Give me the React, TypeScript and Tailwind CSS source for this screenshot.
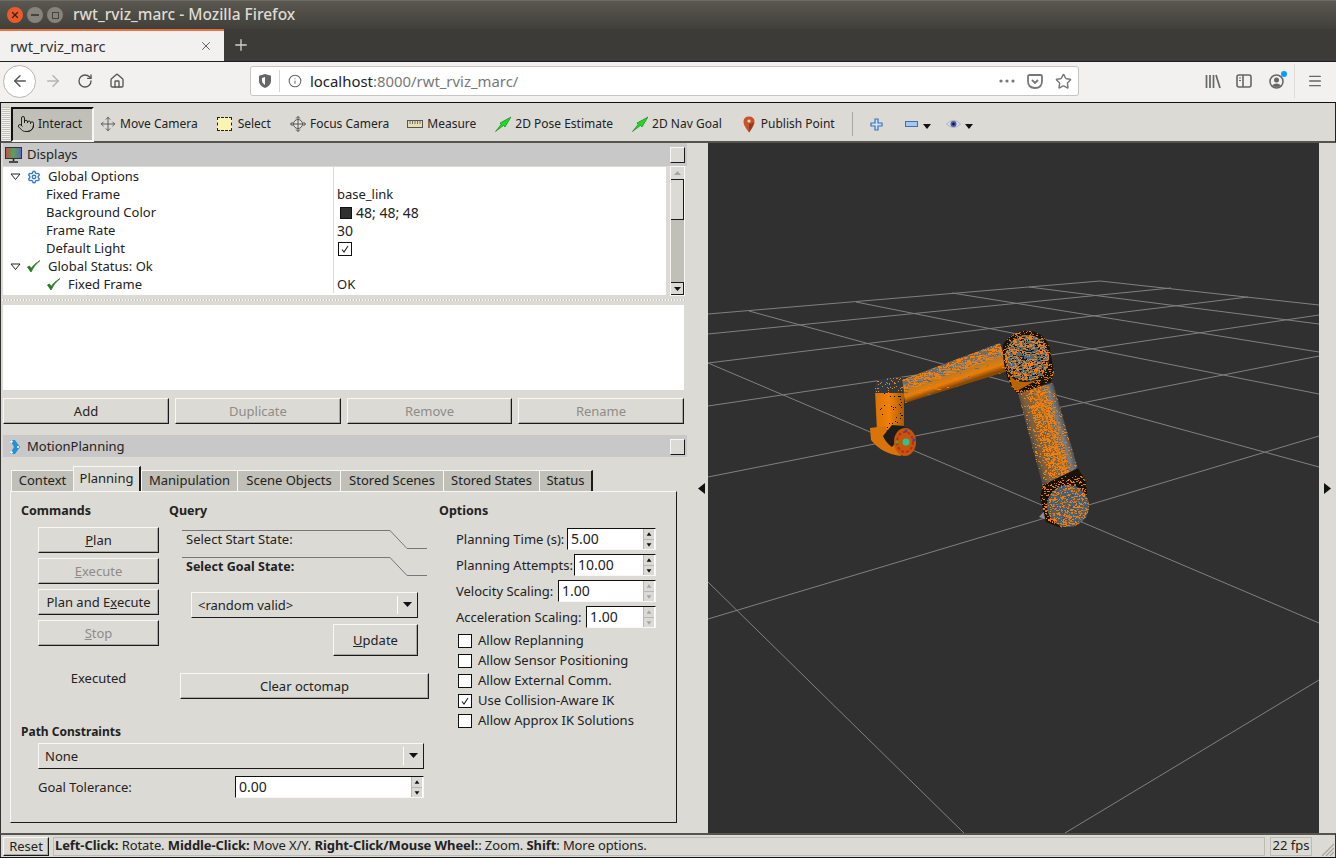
import { useMemo } from 'react';
import { ArrowLeft, ArrowRight, RotateCw, Home, Info, Star, Menu, Pointer, Move, Settings, X, Plus } from 'lucide-react';

const qtFont = "font-['Noto_Sans',sans-serif]";

// seeded speckle so the robot texture is stable between renders
function speckle(seed: number, x0: number, y0: number, x1: number, y1: number, density: number | ((x: number, y: number) => number), colors: string[], maxRun = 2) {
    let s = seed;
    const rnd = () => {
        s = (s * 1664525 + 1013904223) % 4294967296;
        return s / 4294967296;
    };
    const out: { x: number; y: number; w: number; c: string }[] = [];
    for (let y = y0; y < y1; y++) {
        for (let x = x0; x < x1; x++) {
            const d = typeof density === 'number' ? density : density(x, y);
            if (rnd() < d) {
                out.push({ x, y, w: 1 + Math.floor(rnd() * maxRun), c: colors[Math.floor(rnd() * colors.length)] });
            }
        }
    }
    return out;
}

function Speckles({ clip, data }: { clip: string; data: ReturnType<typeof speckle> }) {
    return (
        <g clipPath={`url(#${clip})`} shapeRendering="crispEdges">
            {data.map((d, i) => <rect key={i} x={d.x} y={d.y} width={d.w} height={1} fill={d.c} />)}
        </g>
    );
}

const gridLines = [
    [708, 314, 1100, 281], [1100, 281, 1319, 305],
    [708, 334, 1171, 288], [708, 363, 1248, 297], [708, 406, 1319, 315], [708, 477, 1319, 356],
    [708, 619, 1319, 436], [1065, 833, 1319, 680],
    [1029, 287, 1319, 324], [952, 293, 1319, 352], [856, 302, 1319, 394], [749, 311, 1319, 467],
    [708, 363, 1319, 623], [708, 582, 964, 833],
];

const orange = '#f07f09';

function Viewport() {
    // link1 noise sits in the middle band, link2 noise follows the long axis
    const link1 = useMemo(() => speckle(11, 900, 340, 1010, 405, (x, y) => {
        const d = (y - (381 - (x - 905) * 0.36)) / 9;
        return Math.abs(d) < 1 ? 0.36 : 0.02;
    }, [orange, orange, orange, '#6b6b6b'], 4), []);
    const link2 = useMemo(() => speckle(23, 1015, 380, 1085, 490, (x, y) => {
        const c = 1035 + (y - 388) * 0.27;
        const t = x - c;
        return t > -10 && t < 12 ? 0.5 : 0.12;
    }, [orange, orange, orange, '#5c6468'], 2), []);
    const wrist = useMemo(() => speckle(37, 874, 392, 905, 432, (x) => (x > 888 && x < 902 ? 0.05 : 0.012), ['#141008'], 1), []);
    const cap = useMemo(() => speckle(39, 874, 378, 905, 393, 0.1, [orange], 1), []);
    const top = useMemo(() => speckle(41, 1003, 332, 1052, 385, 0.5, [orange, orange, orange, '#4a6a82', '#1a1a1a'], 3), []);
    const rim = useMemo(() => speckle(43, 1000, 328, 1058, 396, 0.28, [orange, '#b8650a', '#0f0f0f'], 2), []);
    const base = useMemo(() => speckle(53, 1048, 485, 1090, 527, 0.34, [orange, orange, '#d96f06', '#3c5468'], 2), []);
    const baseRim = useMemo(() => speckle(57, 1038, 476, 1092, 530, 0.25, [orange, '#c9700c', '#0f0f0f'], 2), []);
    return (
        <svg className="block w-[611px] h-[690px] bg-[#303030]" viewBox="708 143 611 690">
            <defs>
                <linearGradient id="lnk1" gradientUnits="userSpaceOnUse" x1="946" y1="362" x2="954" y2="386">
                    <stop offset="0" stopColor="#666666" /><stop offset="0.35" stopColor="#7e7e7e" /><stop offset="0.5" stopColor="#b87a2a" /><stop offset="0.8" stopColor="#ea7d08" /><stop offset="1" stopColor="#8a4a04" />
                </linearGradient>
                <linearGradient id="lnk2" gradientUnits="userSpaceOnUse" x1="1028" y1="445" x2="1072" y2="432">
                    <stop offset="0" stopColor="#3a3a3a" /><stop offset="0.2" stopColor="#7a5f40" /><stop offset="0.55" stopColor="#a06c30" /><stop offset="0.78" stopColor="#7c7c7c" /><stop offset="1" stopColor="#2e2e2e" />
                </linearGradient>
                <linearGradient id="wrs" x1="0" y1="0" x2="1" y2="0">
                    <stop offset="0" stopColor="#d97308" /><stop offset="0.5" stopColor="#f08008" /><stop offset="1" stopColor="#a85a05" />
                </linearGradient>
                <clipPath id="c1"><polygon points="902,380 1000,343 1008,371 905,403" /></clipPath>
                <clipPath id="c2"><polygon points="1018,393 1053,383 1082,483 1043,487" /></clipPath>
                <clipPath id="c3"><polygon points="875,392 904,392 904,427 877,432" /></clipPath>
                <clipPath id="c4"><ellipse cx="1027" cy="358" rx="22" ry="23" /></clipPath>
                <clipPath id="c5"><circle cx="1068" cy="506" r="21" /></clipPath>
                <clipPath id="c6"><path d="M1003 345 Q1010 333 1023 331 Q1041 329 1049 345 L1054 372 L1051 382 L1018 394 L1011 386 Q1002 368 1003 345 Z" /></clipPath>
                <clipPath id="c7"><path d="M1043 485 L1040 497 L1046 522 L1062 528 L1088 505 L1086 482 L1078 468 Z" /></clipPath>
                <clipPath id="c8"><path d="M875 388 Q875 379 882 379 L902 377 L904 393 L875 393 Z" /></clipPath>
            </defs>

            {gridLines.map((l, i) => <line key={i} x1={l[0]} y1={l[1]} x2={l[2]} y2={l[3]} stroke="#808080" strokeWidth="1" />)}

            {/* base */}
            <polygon points="1039,517 1062,525 1046,509" fill="#8c8c8c" />

            {/* long link */}
            <polygon points="1018,393 1053,383 1082,483 1043,487" fill="url(#lnk2)" />
            <Speckles clip="c2" data={link2} />
            <path d="M1037 392 L1070 482" stroke={orange} strokeWidth="2" opacity="0.75" />
            <path d="M1043 485 L1040 497 L1046 522 L1062 528 L1088 505 L1086 482 L1078 468 Z" fill="#1a1208" />
            <Speckles clip="c7" data={baseRim} />

            {/* upper link */}
            <polygon points="902,380 1000,343 1008,371 905,403" fill="url(#lnk1)" />
            <Speckles clip="c1" data={link1} />

            {/* shoulder joint */}
            <path d="M1003 345 Q1010 333 1023 331 Q1041 329 1049 345 L1054 372 L1051 382 L1018 394 L1011 386 Q1002 368 1003 345 Z" fill="#1d1408" />
            <Speckles clip="c6" data={rim} />
            <path d="M1009 374 Q1016 386 1037 380 L1017 391 L1012 386 Z" fill="#b8650a" />
            <ellipse cx="1027" cy="358" rx="22" ry="23" fill="#4d6a80" />
            <Speckles clip="c4" data={top} />

            {/* wrist link */}
            <polygon points="875,390 904,390 904,427 877,432" fill="url(#wrs)" />
            <Speckles clip="c3" data={wrist} />
            <path d="M875 388 Q875 379 882 379 L902 377 L904 393 L875 393 Z" fill="#2f3a42" />
            <Speckles clip="c8" data={cap} />

            {/* last joint and flange */}
            <path d="M870 428 L886 426 L888 440 L897 441 L901 456 Q882 454 871 440 Z" fill="#d9740a" />
            <path d="M883 436 L892 425 L904 426 L907 430 L892 447 Q886 443 883 436 Z" fill="#1d1d1d" />
            <ellipse cx="905" cy="442" rx="11" ry="14" fill="#c2570e" />
            <ellipse cx="905" cy="442" rx="8" ry="10" fill="none" stroke="#c9261a" strokeWidth="2" strokeDasharray="3 2" />
            <circle cx="897" cy="442" r="1.5" fill="#3cb034" />
            <circle cx="914" cy="440" r="1.5" fill="#4a3f9a" />
            <circle cx="906" cy="431" r="1.5" fill="#4a3f9a" />
            <circle cx="906" cy="442" r="3.5" fill="#2fc48c" />

            {/* bottom disc */}
            <circle cx="1068" cy="506" r="21" fill="#46627a" />
            <Speckles clip="c5" data={base} />
        </svg>
    );
}

function QtButton({ children, disabled, className }: { children: React.ReactNode; disabled?: boolean; className: string }) {
    return (
        <div className={`flex items-center justify-center pt-px bg-[#dcdad5] border border-t-[#f8f7f6] border-l-[#f8f7f6] border-r-[#1a1a1a] border-b-[#1a1a1a] shadow-[inset_-1px_-1px_0_#a9a7a2] text-[13px] ${disabled ? 'text-[#8d8c88]' : 'text-[#222]'} ${className}`}>
            {children}
        </div>
    );
}

function Combo({ label, className }: { label: string; className: string }) {
    return (
        <div className={`flex items-center h-[26px] bg-[#dcdad5] border border-t-[#f8f7f6] border-l-[#f8f7f6] border-r-[#1a1a1a] border-b-[#1a1a1a] text-[13px] text-[#222] pl-[6px] ${className}`}>
            <span className="flex-1 pt-px">{label}</span>
            <span className="h-[18px] w-px bg-[#9a9893] border-r border-white" />
            <svg width="19" height="8" viewBox="0 0 19 8"><polygon points="5,1 14,1 9.5,6" fill="#111" /></svg>
        </div>
    );
}

function Spin({ value, width, dim }: { value: string; width: string; dim?: boolean }) {
    const fill = dim ? '#a5a4a0' : '#111';
    return (
        <div className={`flex h-[22px] bg-white border border-t-[#111] border-l-[#111] border-r-[#f8f7f6] border-b-[#f8f7f6] ${width}`}>
            <span className="flex-1 pl-[3px] leading-[20px] text-[14px] text-[#222]">{value}</span>
            <div className="flex flex-col w-[11px] mr-px bg-[#dcdad5] border-l border-[#b9b7b2]">
                <svg className="flex-1 border-b border-[#b9b7b2]" viewBox="0 0 10 10" width="10"><polygon points="2.5,7 7.5,7 5,3.5" fill={fill} /></svg>
                <svg className="flex-1" viewBox="0 0 10 10" width="10"><polygon points="2.5,3.5 7.5,3.5 5,7" fill={fill} /></svg>
            </div>
        </div>
    );
}

function Check({ checked, label }: { checked?: boolean; label?: string }) {
    return (
        <div className="flex items-center h-[20px] text-[13px] text-[#222]">
            <span className="flex w-[14px] h-[14px] items-center justify-center bg-white border border-[#111]">
                {checked && <svg width="10" height="10" viewBox="0 0 10 10"><path d="M2 5.5 L4 8 L8 2" fill="none" stroke="#222" strokeWidth="1.1" /></svg>}
            </span>
            {label && <span className="ml-[6px]">{label}</span>}
        </div>
    );
}

function Tri() {
    return <svg width="11" height="8" viewBox="0 0 11 8"><polygon points="1,1 10,1 5.5,6.5" fill="#fff" stroke="#222" strokeWidth="1" /></svg>;
}

function Tick({ size = 15 }: { size?: number }) {
    return <svg width={size} height={size} viewBox="0 0 15 15"><path d="M1.5 8 L5 13 Q8 6 14 1.5 Q8 5 5 9.5 L3.5 7 Z" fill="#1f7a1f" stroke="#1f7a1f" strokeWidth="0.8" /></svg>;
}

function TreeRow({ children, value }: { children: React.ReactNode; value?: React.ReactNode }) {
    return (
        <div className="flex h-[18px] items-center">
            <div className="flex w-[330px] pt-px items-center">{children}</div>
            <div className="flex flex-1 h-[18px] pt-px items-center pl-[3px] border-l border-[#dcdad5]">{value}</div>
        </div>
    );
}

function TitleBar({ icon, title, className }: { icon: React.ReactNode; title: string; className: string }) {
    return (
        <div className={`flex items-center w-[684px] ml-[2px] bg-[#c8c8c8] text-[13px] text-[#222] ${className}`}>
            {icon}
            <span className="flex-1">{title}</span>
            <div className="w-[15px] h-[16px] mr-[2px] bg-[#dcdad5] border border-t-[#f8f7f6] border-l-[#f8f7f6] border-r-[#1a1a1a] border-b-[#1a1a1a]" />
        </div>
    );
}

function Grip() {
    return <div className="h-[2px] bg-[repeating-linear-gradient(90deg,#f6f5f3_0_1px,#c8c6c1_1px_2px,#dcdad5_2px_3px)]" />;
}

function ToolItem({ icon, label, className }: { icon: React.ReactNode; label: string; className: string }) {
    return (
        <div className={`flex items-center ${className}`}>
            <span className="flex w-[16px] h-[16px] items-center justify-center">{icon}</span>
            <span>{label}</span>
        </div>
    );
}

function GreenArrow() {
    return (
        <svg width="16" height="16" viewBox="0 0 16 16">
            <path d="M0.5 15.5 L6 8.5 L5 7 L16 1 L10 11 L8.5 9.5 Z" fill="#17e01c" stroke="#0c5a10" strokeWidth="0.5" />
        </svg>
    );
}

function DownCaret() {
    return <svg width="8" height="5" viewBox="0 0 8 5"><polygon points="0,0 8,0 4,5" fill="#111" /></svg>;
}

function QueryTab({ label, bold }: { label: string; bold?: boolean }) {
    return (
        <div className={`relative w-[260px] h-[27px] pl-[17px] leading-[18px] text-[#222] ${bold ? 'pt-[4px] font-bold text-[12.5px]' : 'pt-[3px] text-[13px]'}`}>
            <svg className="absolute left-0 top-0" width="260" height="27" viewBox="0 0 260 27">
                <path d="M13 3.5 H221 L238 21.5 H258" fill="none" stroke="#777" strokeWidth="1" />
            </svg>
            <span className="relative">{label}</span>
        </div>
    );
}

const tabs = [
    { name: 'Context', w: 'w-[62px]' },
    { name: 'Planning', w: 'w-[68px]', active: true },
    { name: 'Manipulation', w: 'w-[96px]' },
    { name: 'Scene Objects', w: 'w-[103px]' },
    { name: 'Stored Scenes', w: 'w-[103px]' },
    { name: 'Stored States', w: 'w-[96px]' },
    { name: 'Status', w: 'w-[54px]' },
];

export default function App() {
    return (
        <div className={`flex flex-col w-[1336px] h-[858px] overflow-hidden bg-[#3c3b37] ${qtFont}`}>
            {/* window title */}
            <div className="flex items-center h-[29px] bg-gradient-to-b from-[#5a5850] to-[#403f3a] border-t border-[#6d6b63]">
                <div className="flex items-center gap-[4px] pl-[7px]">
                    <span className="flex w-[16px] h-[16px] items-center justify-center rounded-full bg-[#e95b2b] text-[#3c2015]"><X size={10} strokeWidth={3} /></span>
                    <span className="flex w-[16px] h-[16px] items-center justify-center rounded-full bg-[#85837c]"><span className="w-[8px] h-[2px] bg-[#44433e]" /></span>
                    <span className="flex w-[16px] h-[16px] items-center justify-center rounded-full bg-[#85837c]"><span className="w-[7px] h-[7px] border border-[#44433e]" /></span>
                </div>
                <span className="ml-[10px] text-[15.5px] font-medium text-[#dfdbd2]">rwt_rviz_marc - Mozilla Firefox</span>
            </div>

            {/* browser tabs */}
            <div className="flex h-[32px] items-stretch">
                <div className="flex items-center w-[224px] bg-[#f2f1ef] border-t-2 border-[#e9713f] pl-[10px] pr-[11px] text-[14.8px] text-[#333]">
                    <span className="flex-1">rwt_rviz_marc</span>
                    <X size={14} strokeWidth={1.6} color="#555" />
                </div>
                <div className="flex items-center pl-[8px]"><Plus size={18} strokeWidth={1.8} color="#d0cfc9" /></div>
            </div>

            {/* nav bar */}
            <div className="flex items-center h-[41px] pb-[2px] bg-[#f2f1ef] border-t border-[#1f1f1c] pl-[3px]">
                <span className="flex w-[33px] h-[33px] items-center justify-center rounded-full bg-white border border-[#b8b6b2]"><ArrowLeft size={18} strokeWidth={2} color="#555" /></span>
                <span className="flex w-[32px] justify-center ml-[1px]"><ArrowRight size={18} strokeWidth={2} color="#b5b4b1" /></span>
                <span className="flex w-[32px] justify-center"><RotateCw size={16} strokeWidth={2} color="#555" /></span>
                <span className="flex w-[32px] justify-center"><Home size={16} strokeWidth={2} color="#555" /></span>
                <div className="flex items-center w-[829px] h-[30px] ml-[117px] rounded-[3px] bg-white border border-[#c8c6c2] text-[14.9px]">
                    <span className="flex w-[28px] justify-center">
                        <svg width="14" height="16" viewBox="0 0 14 16"><path d="M7 1 L13 2.8 V8 Q13 12.5 7 15 Q1 12.5 1 8 V2.8 Z M7 4 L4 5 V8 Q4 10.5 7 12 Z" fill="#666" fillRule="evenodd" /></svg>
                    </span>
                    <span className="w-px h-[22px] bg-[#d8d6d2]" />
                    <span className="flex w-[30px] justify-center"><Info size={14} strokeWidth={1.8} color="#666" /></span>
                    <span className="flex-1"><span className="text-[#222]">localhost</span><span className="text-[#77787a]">:8000/rwt_rviz_marc/</span></span>
                    <svg width="16" height="4" viewBox="0 0 16 4" fill="#777"><circle cx="2" cy="2" r="1.6" /><circle cx="8" cy="2" r="1.6" /><circle cx="14" cy="2" r="1.6" /></svg>
                    <svg className="ml-[12px]" width="16" height="15" viewBox="0 0 16 15"><path d="M2.5 1 H13.5 Q15 1 15 2.5 V7 Q15 14 8 14 Q1 14 1 7 V2.5 Q1 1 2.5 1 Z M5 6 L8 9 L11 6" fill="none" stroke="#777" strokeWidth="1.8" /></svg>
                    <Star className="ml-[12px] mr-[6px]" size={17} strokeWidth={2} color="#777" />
                </div>
                <svg className="ml-[126px]" width="16" height="15" viewBox="0 0 16 15"><path d="M1.5 1 V14 M5 1 V14 M8.5 1 V14 M11 1 L15 14" fill="none" stroke="#666" strokeWidth="1.7" /></svg>
                <svg className="ml-[15px]" width="16" height="14" viewBox="0 0 16 14"><rect x="1" y="1" width="14" height="12" rx="2" fill="none" stroke="#666" strokeWidth="1.6" /><path d="M7 1 V13" stroke="#666" strokeWidth="1.6" /><path d="M3 4 H5 M3 6.5 H5" stroke="#666" strokeWidth="1.2" /></svg>
                <div className="relative ml-[17px] w-[15px] h-[15px]">
                    <svg width="15" height="15" viewBox="0 0 15 15"><circle cx="7.5" cy="7.5" r="6.5" fill="none" stroke="#666" strokeWidth="1.5" /><circle cx="7.5" cy="6" r="2.5" fill="#666" /><path d="M3 11.5 Q7.5 7.5 12 11.5 Q7.5 14.5 3 11.5 Z" fill="#666" /></svg>
                    <span className="absolute right-[-3px] top-[-3px] w-[6px] h-[6px] rounded-full bg-[#0a9dff]" />
                </div>
                <span className="ml-[10px] w-px h-[34px] bg-[#dedcd9]" />
                <Menu className="ml-[12px]" size={16} strokeWidth={2} color="#666" />
            </div>

            {/* rviz toolbar */}
            <div className="flex items-center h-[41px] pt-[4px] bg-[#dcdad5] border-t border-b-2 border-x border-t-[#111] border-b-[#55544f] border-x-[#222] text-[12px] text-[#222]">
                <div className="w-[8px] h-[34px] ml-[1px] bg-[repeating-linear-gradient(0deg,#f4f3f1_0_1px,#c0bfb9_1px_2px)]" />
                <div className="flex items-center w-[83px] h-[35px] ml-[1px] pl-[4px] bg-[#c0bfb8] border-2 border-t-[#111] border-l-[#111] border-r-[#f8f7f6] border-b-[#f8f7f6]">
                    <Pointer size={18} strokeWidth={1.2} color="#111" />
                    <span className="ml-[3px]">Interact</span>
                </div>
                <ToolItem className="ml-[6px] gap-[4px]" label="Move Camera" icon={<Move size={16} strokeWidth={1.2} color="#444" />} />
                <ToolItem className="ml-[19px] gap-[5px]" label="Select" icon={<span className="block w-[15px] h-[14px] bg-[#fbf3b4] border border-dashed border-[#222]" />} />
                <ToolItem className="ml-[19px] gap-[4px]" label="Focus Camera" icon={
                    <svg width="16" height="16" viewBox="0 0 16 16" fill="none" stroke="#555" strokeWidth="1"><circle cx="8" cy="8" r="4.5" fill="#e8e6e0" /><path d="M8 0.5 V15.5 M0.5 8 H15.5" /><path d="M8 0.5 L6 2.5 M8 0.5 L10 2.5 M8 15.5 L6 13.5 M8 15.5 L10 13.5 M0.5 8 L2.5 6 M0.5 8 L2.5 10 M15.5 8 L13.5 6 M15.5 8 L13.5 10" /></svg>
                } />
                <ToolItem className="ml-[18px] gap-[4px]" label="Measure" icon={
                    <svg width="16" height="8" viewBox="0 0 16 8"><rect x="0.5" y="0.5" width="15" height="7" fill="#e9dfae" stroke="#555" /><path d="M3 1 V4 M5.5 1 V4 M8 1 V4 M10.5 1 V4 M13 1 V4" stroke="#555" strokeWidth="0.8" /></svg>
                } />
                <ToolItem className="ml-[19px] gap-[4px]" label="2D Pose Estimate" icon={<GreenArrow />} />
                <ToolItem className="ml-[19px] gap-[4px]" label="2D Nav Goal" icon={<GreenArrow />} />
                <ToolItem className="ml-[19px] gap-[4px]" label="Publish Point" icon={
                    <svg width="12" height="17" viewBox="0 0 12 17"><path d="M6 0.5 Q11.5 0.5 11.5 6 Q11.5 9.5 6 16.5 Q0.5 9.5 0.5 6 Q0.5 0.5 6 0.5 Z" fill="#c8502a" /><path d="M6 8 Q9 8 11 6 Q10.5 10 6 16.5 Z" fill="#8a4020" /><circle cx="6" cy="5" r="1.6" fill="#f0e0c8" /></svg>
                } />
                <span className="w-px h-[24px] ml-[17px] bg-[#a9a7a2]" />
                <svg className="ml-[17px]" width="13" height="13" viewBox="0 0 13 13"><path d="M5 1 H8 V5 H12 V8 H8 V12 H5 V8 H1 V5 H5 Z" fill="#cfe0f5" stroke="#3a72b8" strokeWidth="1.2" /></svg>
                <svg className="ml-[22px]" width="13" height="6" viewBox="0 0 13 6"><rect x="0.5" y="0.5" width="12" height="5" fill="#a8c8ec" stroke="#3a72b8" /></svg>
                <span className="ml-[5px] mt-[4px] flex"><DownCaret /></span>
                <svg className="ml-[15px]" width="15" height="10" viewBox="0 0 15 10"><path d="M0.5 5 Q7.5 -2.5 14.5 5 Q7.5 12 0.5 5 Z" fill="#d8dcec" stroke="#9aa0b8" strokeWidth="0.7" /><circle cx="7.5" cy="5" r="3" fill="#4a5aa8" /><circle cx="7.5" cy="5" r="1.2" fill="#111" /></svg>
                <span className="ml-[4px] mt-[4px] flex"><DownCaret /></span>
            </div>

            {/* main area */}
            <div className="flex h-[690px] bg-[#dcdad5] border-l border-[#333]">
                <div className="flex flex-col w-[685px] text-[13px] text-[#222]">
                    <TitleBar className="h-[23px]" title="Displays" icon={
                        <svg className="ml-[2px] mr-[5px]" width="17" height="16" viewBox="0 0 17 16">
                            <defs><linearGradient id="mon" x1="0" y1="0" x2="1" y2="0"><stop offset="0" stopColor="#c0504a" /><stop offset="0.5" stopColor="#5aa05a" /><stop offset="1" stopColor="#5a6ac0" /></linearGradient></defs>
                            <rect x="0.5" y="0.5" width="16" height="11" fill="url(#mon)" stroke="#333" /><path d="M8.5 12 V14 M4 15 H13" stroke="#222" strokeWidth="1.6" />
                        </svg>
                    } />
                    <div className="flex h-[130px] ml-[1px]">
                        <div className="w-[663px] mt-[1px] ml-[1px] h-[128px] bg-white overflow-hidden">
                            <TreeRow value={null}>
                                <span className="ml-[7px] flex"><Tri /></span>
                                <Settings className="ml-[6px]" size={14} strokeWidth={2.4} color="#3b78c8" />
                                <span className="ml-[7px]">Global Options</span>
                            </TreeRow>
                            <TreeRow value="base_link"><span className="ml-[43px]">Fixed Frame</span></TreeRow>
                            <TreeRow value={<><span className="w-[12px] h-[12px] ml-[3px] mr-[4px] bg-[#303030] border border-[#111]" /><span className="text-[14px]">48; 48; 48</span></>}><span className="ml-[43px]">Background Color</span></TreeRow>
                            <TreeRow value={<span className="text-[14px]">30</span>}><span className="ml-[43px]">Frame Rate</span></TreeRow>
                            <TreeRow value={<span className="ml-[1px]"><Check checked /></span>}><span className="ml-[43px]">Default Light</span></TreeRow>
                            <TreeRow value={null}>
                                <span className="ml-[7px] flex"><Tri /></span>
                                <span className="ml-[5px] flex"><Tick /></span>
                                <span className="ml-[7px]">Global Status: Ok</span>
                            </TreeRow>
                            <TreeRow value="OK">
                                <span className="ml-[43px] flex"><Tick /></span>
                                <span className="ml-[7px]">Fixed Frame</span>
                            </TreeRow>
                        </div>
                        <div className="flex flex-col w-[15px] ml-[4px] bg-[#c0bfb8] border border-t-[#f8f7f6] border-l-[#f8f7f6] border-r-[#f8f7f6] border-b-[#f8f7f6]">
                            <div className="flex h-[13px] items-center justify-center bg-[#dcdad5] border-b border-[#1a1a1a]"><svg width="7" height="4" viewBox="0 0 7 4"><polygon points="0,4 7,4 3.5,0" fill="#a5a4a0" /></svg></div>
                            <div className="h-[40px] bg-[#dcdad5] border-b border-r border-[#1a1a1a]" />
                            <div className="flex-1" />
                            <div className="flex h-[13px] items-center justify-center bg-[#dcdad5] border-t border-r border-b border-[#1a1a1a]"><svg width="7" height="4" viewBox="0 0 7 4"><polygon points="0,0 7,0 3.5,4" fill="#111" /></svg></div>
                        </div>
                    </div>
                    <div className="h-[9px] pt-[3px] ml-[1px]"><Grip /></div>
                    <div className="w-[681px] h-[85px] ml-[2px] bg-white" />
                    <div className="flex gap-[6px] ml-[2px] mt-[8px]">
                        <QtButton className="w-[166px] h-[26px]">Add</QtButton>
                        <QtButton className="w-[166px] h-[26px]" disabled>Duplicate</QtButton>
                        <QtButton className="w-[165px] h-[26px]" disabled>Remove</QtButton>
                        <QtButton className="w-[166px] h-[26px]" disabled>Rename</QtButton>
                    </div>
                    <TitleBar className="h-[22px] mt-[11px] pt-px" title="MotionPlanning" icon={
                        <svg className="ml-[6px] mr-[6px]" width="12" height="16" viewBox="0 0 12 16"><path d="M1 1 L6 1 L11 8 L6 15 L1 15 L5 8 Z" fill="#2a8fd0" /><circle cx="2.5" cy="2.5" r="1.2" fill="#fff" /><circle cx="2.5" cy="13.5" r="1.2" fill="#fff" /><circle cx="9" cy="8" r="1" fill="#fff" /></svg>
                    } />

                    {/* tab strip */}
                    <div className="flex items-end h-[25px] ml-[10px] mt-[9px]">
                        {tabs.map(t => (
                            <div key={t.name} className={t.active
                                ? `flex items-center justify-center h-[25px] ${t.w} bg-[#dcdad5] border-t border-l border-r-2 border-t-[#f8f7f6] border-l-[#f8f7f6] border-r-[#1a1a1a]`
                                : `flex items-center justify-center h-[21px] ${t.w} bg-[#c0bfb8] border-t border-l border-t-[#f8f7f6] border-l-[#f8f7f6] ${t.name === 'Status' ? 'border-r-2 border-r-[#1a1a1a]' : ''}`}>
                                {t.name}
                            </div>
                        ))}
                    </div>

                    {/* tab pane */}
                    <div className="flex w-[667px] h-[332px] ml-[9px] border border-t-[#f8f7f6] border-l-[#f8f7f6] border-r-[#1a1a1a] border-b-[#1a1a1a]">
                        <div className="flex flex-col w-[418px] pl-[10px]">
                            <div className="flex h-[230px]">
                                <div className="flex flex-col w-[148px]">
                                    <div className="mt-[10px] h-[17px] leading-[18px] text-[12.5px] font-bold">Commands</div>
                                    <div className="flex flex-col gap-[5px] ml-[17px] mt-[8px]">
                                        <QtButton className="w-[121px] h-[26px]"><span><u>P</u>lan</span></QtButton>
                                        <QtButton className="w-[121px] h-[26px]" disabled><span><u>E</u>xecute</span></QtButton>
                                        <QtButton className="w-[121px] h-[26px]"><span>Plan and E<u>x</u>ecute</span></QtButton>
                                        <QtButton className="w-[121px] h-[26px]" disabled><span><u>S</u>top</span></QtButton>
                                    </div>
                                    <div className="w-[121px] ml-[17px] mt-[23px] h-[18px] leading-[18px] text-center">Executed</div>
                                </div>
                                <div className="flex flex-col w-[260px]">
                                    <div className="mt-[10px] h-[17px] leading-[18px] text-[12.5px] font-bold">Query</div>
                                    <div className="mt-[8px]"><QueryTab label="Select Start State:" /></div>
                                    <QueryTab label="Select Goal State:" bold />
                                    <Combo className="w-[227px] ml-[22px] mt-[11px]" label="<random valid>" />
                                    <QtButton className="w-[85px] h-[32px] ml-[164px] mt-[6px]"><span><u>U</u>pdate</span></QtButton>
                                    <QtButton className="w-[249px] h-[26px] ml-[11px] mt-[17px]">Clear octomap</QtButton>
                                </div>
                            </div>
                            <div className="h-[18px] pt-px leading-[18px] text-[12px] font-bold">Path Constraints</div>
                            <Combo className="w-[386px] ml-[17px] mt-[3px]" label="None" />
                            <div className="flex items-center ml-[17px] mt-[7px]">
                                <span className="w-[197px] pt-px">Goal Tolerance:</span>
                                <Spin value="0.00" width="w-[189px]" />
                            </div>
                        </div>
                        <div className="flex flex-col w-[240px] pl-[10px]">
                            <div className="mt-[10px] h-[17px] leading-[18px] text-[12.5px] font-bold">Options</div>
                            <div className="flex flex-col gap-[4px] ml-[17px] mt-[9px]">
                                <div className="flex items-center"><span className="w-[111px] pt-px">Planning Time (s):</span><Spin value="5.00" width="w-[89px]" /></div>
                                <div className="flex items-center"><span className="w-[118px] pt-px">Planning Attempts:</span><Spin value="10.00" width="w-[82px]" /></div>
                                <div className="flex items-center"><span className="w-[102px] pt-px">Velocity Scaling:</span><Spin value="1.00" width="w-[98px]" dim /></div>
                                <div className="flex items-center"><span className="w-[130px] pt-px">Acceleration Scaling:</span><Spin value="1.00" width="w-[70px]" dim /></div>
                            </div>
                            <div className="flex flex-col ml-[19px] mt-[3px]">
                                <Check label="Allow Replanning" />
                                <Check label="Allow Sensor Positioning" />
                                <Check label="Allow External Comm." />
                                <Check checked label="Use Collision-Aware IK" />
                                <Check label="Allow Approx IK Solutions" />
                            </div>
                        </div>
                    </div>
                </div>

                {/* splitter */}
                <div className="flex w-[22px] items-center justify-center pl-[8px]">
                    <svg width="7" height="11" viewBox="0 0 7 11"><polygon points="7,0 7,11 0,5.5" fill="#111" /></svg>
                </div>

                <Viewport />

                <div className="flex w-[16px] items-center justify-center">
                    <svg width="7" height="11" viewBox="0 0 7 11"><polygon points="0,0 0,11 7,5.5" fill="#111" /></svg>
                </div>
            </div>

            {/* status bar */}
            <div className="flex h-[25px] items-center bg-[#dcdad5] border-t-2 border-b border-x border-t-[#55544f] border-b-[#111] border-x-[#333] pl-[2px] text-[13px] text-[#222]">
                <QtButton className="w-[46px] h-[19px]">Reset</QtButton>
                <div className="flex items-center w-[1212px] h-[19px] ml-[4px] pl-[1px] border border-[#bdbbb6] tracking-[-0.09px]">
                    <b>Left-Click:</b>&nbsp;Rotate.&nbsp;<b>Middle-Click:</b>&nbsp;Move X/Y.&nbsp;<b>Right-Click/Mouse Wheel:</b>: Zoom.&nbsp;<b>Shift</b>: More options.
                </div>
                <div className="flex items-center justify-center w-[42px] h-[19px] ml-[5px] border border-[#bdbbb6]">22 fps</div>
                <svg className="ml-[8px] mt-[6px]" width="14" height="14" viewBox="0 0 14 14"><path d="M2 14 L14 2 M6 14 L14 6 M10 14 L14 10" stroke="#a5a39e" strokeWidth="1.2" /></svg>
            </div>
        </div>
    );
}
